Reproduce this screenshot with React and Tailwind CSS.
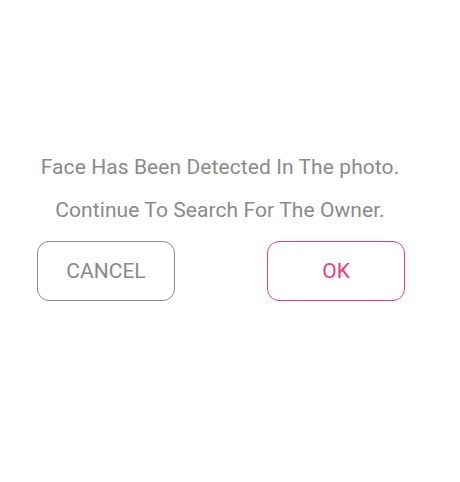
export default function App() {
  return (
    <div className="w-[460px] h-[482px] bg-white" style={{ fontFamily: "Roboto, sans-serif" }}>
      <div className="pt-[153px] flex flex-col">
        <p className="w-[440px] text-center text-[21px] leading-[28px] tracking-[0.08px] text-[#8a8a8a]">
          Face Has Been Detected In The photo.
        </p>
        <p className="mt-[15px] w-[440px] text-center text-[21px] leading-[28px] tracking-[0.08px] text-[#8a8a8a]">
          Continue To Search For The Owner.
        </p>
        <div className="mt-[17px] pl-[37px] flex gap-[92px]">
          <button className="w-[138px] h-[60px] pt-[2px] rounded-[12px] border-[1.5px] border-[#8a8a8a] text-[21px] text-[#8a8a8a] flex items-center justify-center">
            CANCEL
          </button>
          <button className="w-[138px] h-[60px] pt-[2px] rounded-[12px] border-[1.5px] border-[#ec407a] text-[21px] text-[#ec407a] flex items-center justify-center">
            OK
          </button>
        </div>
      </div>
    </div>
  );
}
